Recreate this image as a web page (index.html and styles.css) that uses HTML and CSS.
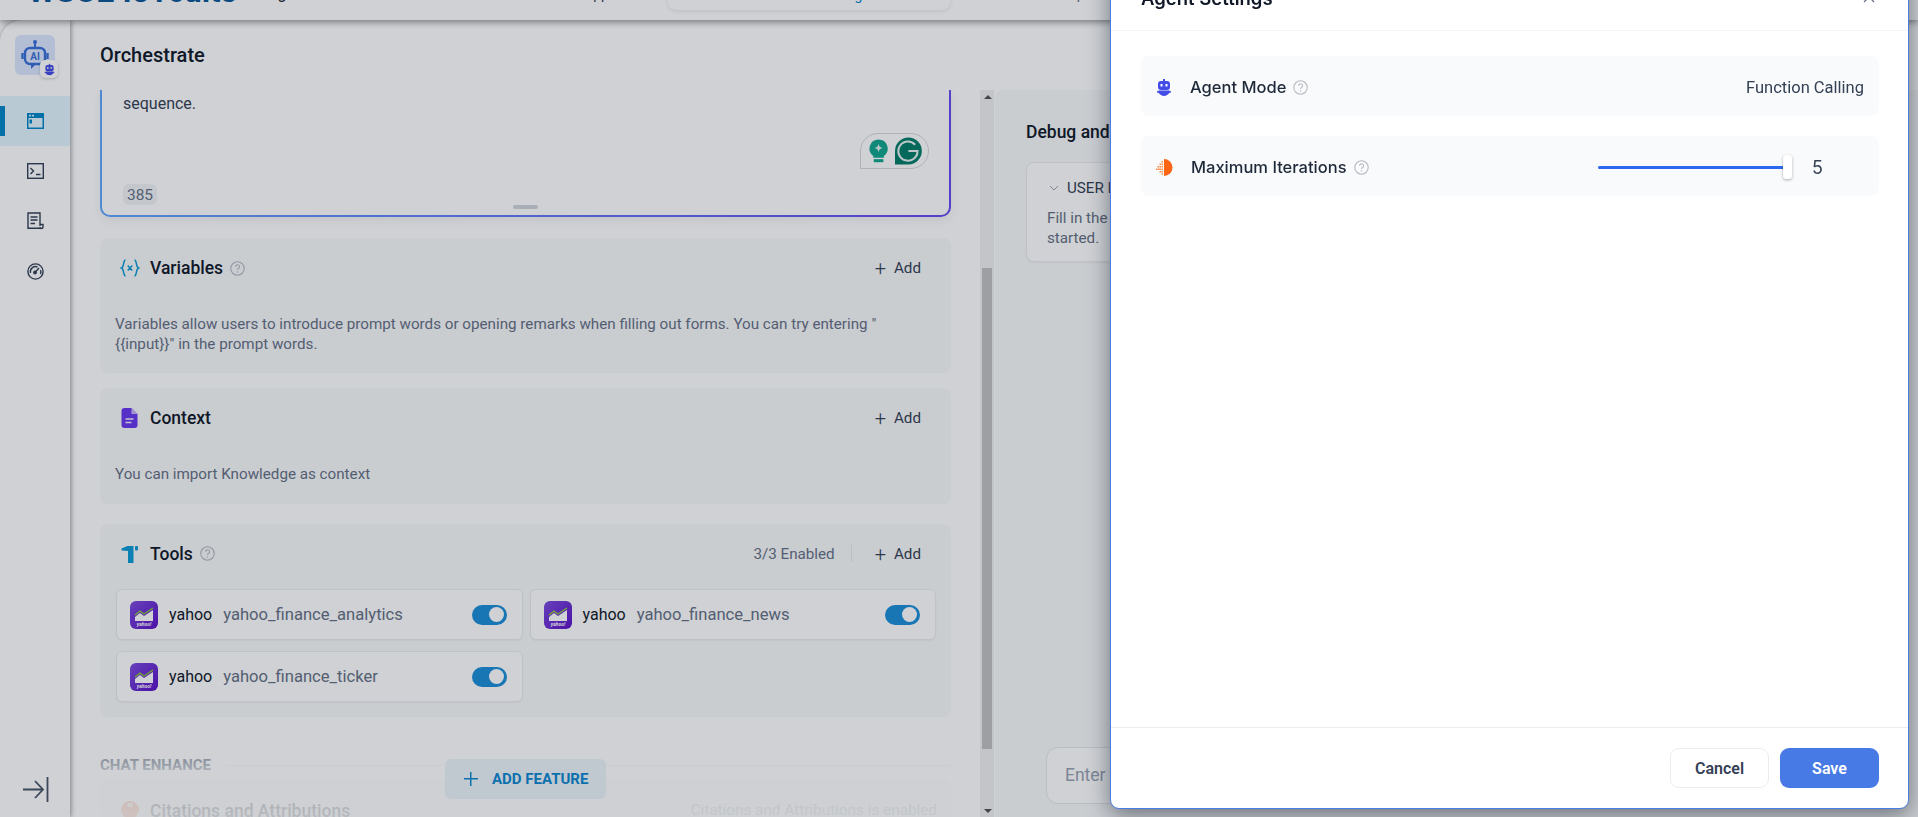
FILE: index.html
```html
<!DOCTYPE html>
<html lang="en">
<head>
<meta charset="utf-8">
<title>Orchestrate</title>
<link rel="stylesheet" href="styles.css">
</head>
<body>
<div class="app">
  <header class="topbar">
    <div class="brand">WSO2 IoTcuits</div>
    <div class="topnav">Agents</div>
    <div class="topnav-2">Apps</div>
    <div class="pill"><span class="pill-text">Finance Agent</span></div>
    <div class="topright">Help</div>
  </header>
  <div class="shell">
    <aside class="sidebar">
      <div class="logo-wrap">
        <div class="logo">
          <svg width="28" height="32" viewBox="0 0 28 32" fill="none"><circle cx="14" cy="3" r="2" fill="#3a6fd8"/><path d="M14 4v5" stroke="#3a6fd8" stroke-width="2"/><rect x="4" y="9" width="20" height="16" rx="5" stroke="#3a6fd8" stroke-width="2.4"/><path d="M1.5 14v6M26.500 14v6" stroke="#3a6fd8" stroke-width="2.4"/><path d="M10 25v5l5-5z" fill="#3a6fd8"/><text x="14" y="21" class="logo-ai">AI</text></svg>
        </div>
        <div class="logo-badge">
          <svg width="11" height="13" viewBox="0 0 16 17"><use href="#robot"/></svg>
        </div>
      </div>
      <nav class="side-nav">
        <div class="side-item active"><span class="active-bar"></span>
          <svg width="17" height="16" viewBox="0 0 17 16"><rect x="0.500" y="0.500" width="16" height="15" fill="#0086c9" stroke="#0086c9"/><rect x="1.500" y="5" width="14" height="9.500" fill="#e4f6fe"/><rect x="2" y="1.800" width="2" height="1.600" fill="#e4f6fe"/><rect x="5" y="1.800" width="2" height="1.600" fill="#e4f6fe"/><rect x="2.500" y="6.500" width="2.500" height="4" fill="#0086c9"/></svg>
        </div>
        <div class="side-item">
          <svg width="17" height="16" viewBox="0 0 17 16" fill="none" stroke="#344054" stroke-width="1.400"><rect x="0.700" y="0.700" width="15.600" height="14.600"/><path d="M3.500 5l3 3-3 3M9 11.500h4.500"/></svg>
        </div>
        <div class="side-item">
          <svg width="17" height="18" viewBox="0 0 17 18" fill="none" stroke="#344054" stroke-width="1.400"><path d="M13 14V1H1v15.300h12.500M13 12.500h3v2.500a1.500 1.500 0 0 1-3 0"/><path d="M3.500 5h7M3.500 8h7M3.500 11.500h4.500"/></svg>
        </div>
        <div class="side-item">
          <svg width="17" height="17" viewBox="0 0 17 17" fill="none" stroke="#344054" stroke-width="1.400"><circle cx="8.500" cy="8.500" r="7.600"/><path d="M3.500 10a5.200 5.200 0 0 1 7-6M13.500 7a5.200 5.200 0 0 1 0 4M7.500 10l4.500-5" /><circle cx="8" cy="9.500" r="1.200" fill="#344054"/></svg>
        </div>
      </nav>
      <div class="collapse">
        <svg width="27" height="27" viewBox="0 0 27 27" fill="none" stroke="#475467" stroke-width="1.800"><path d="M1 13.500h19M13 5l8 8.500-8 8.500M25.500 1v25"/></svg>
      </div>
    </aside>
    <main class="main">
      <h1 class="page-title">Orchestrate</h1>
      <div class="columns">
        <section class="config">
          <div class="prompt-border">
            <div class="prompt">
              <p class="prompt-text">sequence.</p>
              <div class="grammarly">
                <svg width="20" height="24" viewBox="0 0 20 24"><path d="M10 0a9.500 9.500 0 0 1 5.500 17.200V19h-11v-1.800A9.500 9.500 0 0 1 10 0z" fill="#12a68d"/><path d="M10 4.500c.6 3 1.500 4 4.500 4.500-3 .6-4 1.500-4.500 4.500-.6-3-1.500-4-4.500-4.500 3-.6 4-1.500 4.500-4.500z" fill="#e8f5f2"/><rect x="5" y="20.500" width="10" height="3.200" fill="#12a68d"/></svg>
                <svg width="28" height="28" viewBox="0 0 28 28"><path d="M14 0a14 14 0 0 1 0 28H0V14A14 14 0 0 1 14 0z" fill="#027d68"/><path d="M21 7.500A10 10 0 1 0 23.500 14H14" fill="none" stroke="#e9f2f0" stroke-width="2.200"/></svg>
              </div>
              <div class="prompt-foot"><span class="count">385</span><span class="handle"></span></div>
            </div>
          </div>

          <div class="panel panel-vars">
            <div class="panel-head">
              <svg class="panel-icon" width="19" height="18" viewBox="0 0 19 18" fill="none" stroke="#0b9bd6" stroke-width="1.500"><path d="M5 1C2.500 1 3.800 8 1 9c2.800 1 1.500 8 4 8M14 1c2.500 0 1.200 7 4 8-2.800 1-1.500 8-4 8M7.200 6.500l4.600 5M11.800 6.500l-4.600 5"/></svg>
              <span class="panel-title">Variables</span>
              <svg class="help" width="15" height="15" viewBox="0 0 15 15"><use href="#help"/></svg>
              <div class="panel-actions"><span class="add"><span class="plus">+</span>Add</span></div>
            </div>
            <p class="panel-desc">Variables allow users to introduce prompt words or opening remarks when filling out forms. You can try entering "<br>{{input}}" in the prompt words.</p>
          </div>

          <div class="panel panel-ctx">
            <div class="panel-head">
              <svg class="panel-icon" width="17" height="20" viewBox="0 0 17 20"><path d="M3 0h7l6 6v11a3 3 0 0 1-3 3H3a3 3 0 0 1-3-3V3a3 3 0 0 1 3-3z" fill="#6938ef"/><path d="M10 0v6h6z" fill="#c9b8fa"/><path d="M4 11h8M4 14.500h6" stroke="#f0ebff" stroke-width="1.500"/></svg>
              <span class="panel-title">Context</span>
              <div class="panel-actions"><span class="add"><span class="plus">+</span>Add</span></div>
            </div>
            <p class="panel-desc">You can import Knowledge as context</p>
          </div>

          <div class="panel panel-tools">
            <div class="panel-head tools-head">
              <svg class="panel-icon" width="17" height="18" viewBox="0 0 17 18"><path d="M0 3.500L6 1h6v17H6.500V6L0 5.500z" fill="#0b9bd6"/><rect x="13.500" y="1" width="3" height="4.500" rx="1" fill="#0b9bd6"/></svg>
              <span class="panel-title">Tools</span>
              <svg class="help" width="15" height="15" viewBox="0 0 15 15"><use href="#help"/></svg>
              <div class="panel-actions">
                <span class="enabled">3/3 Enabled</span><span class="divider"></span>
                <span class="add"><span class="plus">+</span>Add</span>
              </div>
            </div>
            <div class="tool-grid">
              <div class="tool">
                <svg class="tool-logo" width="28" height="28" viewBox="0 0 28 28"><use href="#yahoo"/></svg>
                <span class="tool-vendor">yahoo</span><span class="tool-name">yahoo_finance_analytics</span>
                <span class="toggle"></span>
              </div>
              <div class="tool">
                <svg class="tool-logo" width="28" height="28" viewBox="0 0 28 28"><use href="#yahoo"/></svg>
                <span class="tool-vendor">yahoo</span><span class="tool-name">yahoo_finance_news</span>
                <span class="toggle"></span>
              </div>
              <div class="tool">
                <svg class="tool-logo" width="28" height="28" viewBox="0 0 28 28"><use href="#yahoo"/></svg>
                <span class="tool-vendor">yahoo</span><span class="tool-name">yahoo_finance_ticker</span>
                <span class="toggle"></span>
              </div>
            </div>
          </div>

          <div class="enhance-head"><span class="enhance-label">CHAT ENHANCE</span><span class="enhance-line"></span></div>
          <div class="panel panel-cite">
            <svg class="cite-icon" width="18" height="18" viewBox="0 0 18 18"><circle cx="9" cy="9" r="9" fill="#f9703e"/><text x="9" y="15" class="cite-mark">“</text></svg>
            <span class="panel-title">Citations and Attributions</span>
            <span class="cite-note">Citations and Attributions is enabled</span>
          </div>
          <div class="fade"></div>
          <button class="add-feature"><span class="af-plus"></span>ADD FEATURE</button>
        </section>
        <div class="scrollbar">
          <span class="arrow-up"></span>
          <span class="thumb"></span>
          <span class="arrow-down"></span>
        </div>
        <section class="debug">
          <h2 class="debug-title">Debug and Preview</h2>
          <div class="user-card">
            <div class="user-head"><svg width="10" height="6" viewBox="0 0 10 6" fill="none" stroke="#98a2b3"><path d="M1 1l4 4 4-4"/></svg><span>USER INPUT</span></div>
            <p class="user-text">Fill in the value of the variable, which will be automatically replaced in the prompt word every time a new session is<br>started.</p>
          </div>
          <div class="chat-input">Enter your message</div>
        </section>
      </div>
    </main>
  </div>
</div>

<div class="overlay"></div>

<aside class="modal">
  <div class="modal-head">
    <span class="modal-title">Agent Settings</span>
    <svg width="14" height="14" viewBox="0 0 14 14" fill="none" stroke="#667085" stroke-width="1.300"><path d="M2 2l10 10M12 2L2 12"/></svg>
  </div>
  <div class="modal-body">
    <div class="row">
      <svg class="row-icon" width="16" height="17" viewBox="0 0 16 17"><use href="#robot"/></svg>
      <span class="row-label">Agent Mode</span>
      <svg class="help" width="15" height="15" viewBox="0 0 15 15"><use href="#help"/></svg>
      <span class="row-value">Function Calling</span>
    </div>
    <div class="row">
      <svg class="row-icon" width="17" height="17" viewBox="0 0 17 17">
        <path d="M8 0a8.500 8.500 0 0 1 0 17z" fill="#fb6514"/>
        <path d="M5.500 2h1.500v1.500H5.500zM3.500 4.500H5V6H3.500zM5.500 4.500h1.500V6H5.500zM1.500 7H3v1.500H1.500zM3.500 7H5v1.500H3.500zM5.500 7h1.500v1.500H5.500zM0 9.500h1.500V11H0zM1.800 9.500h1.500V11H1.800zM3.500 9.500H5V11H3.500zM5.500 9.500h1.500V11H5.500zM3.500 12H5v1.500H3.500zM5.500 12h1.500v1.500H5.500zM5.500 14.300h1.500v1.500H5.500z" fill="#fb8b4a"/>
      </svg>
      <span class="row-label row-label-long">Maximum Iterations</span>
      <svg class="help" width="15" height="15" viewBox="0 0 15 15"><use href="#help"/></svg>
      <div class="slider">
        <span class="slider-track"></span><span class="slider-thumb"></span>
        <span class="slider-value">5</span>
      </div>
    </div>
  </div>
  <div class="modal-foot">
    <button class="btn btn-cancel">Cancel</button>
    <button class="btn btn-save">Save</button>
  </div>
</aside>

<svg class="defs" width="0" height="0" aria-hidden="true">
  <defs>
    <symbol id="robot" viewBox="0 0 16 17">
      <rect x="7" y="0" width="2" height="3" fill="#444ce7"/>
      <rect x="2" y="2" width="12" height="9" rx="3" fill="#444ce7"/>
      <rect x="4.500" y="5" width="2" height="2.500" fill="#fff"/>
      <rect x="9.500" y="5" width="2" height="2.500" fill="#fff"/>
      <path d="M3 11.500h10c.5 0 2 .5 2 1.500s-1 .8-1.600.8C12.500 15.500 10 17 8 17s-4.500-1.500-5.400-3.200c-.6 0-1.600.2-1.600-.8s1.500-1.500 2-1.500z" fill="#444ce7"/>
    </symbol>
    <symbol id="help" viewBox="0 0 15 15">
      <circle cx="7.500" cy="7.500" r="6.700" fill="none" stroke="#b6bac2" stroke-width="1.100"/>
      <path d="M5.600 5.800a2 2 0 1 1 2.900 1.800c-.6.300-1 .7-1 1.500" fill="none" stroke="#b6bac2" stroke-width="1.100"/>
      <circle cx="7.500" cy="11" r=".7" fill="#b6bac2"/>
    </symbol>
    <linearGradient id="yg" x1="0" y1="0" x2="1" y2="1"><stop offset="0" stop-color="#7d4be0"/><stop offset="1" stop-color="#5a0fc8"/></linearGradient>
    <symbol id="yahoo" viewBox="0 0 28 28">
      <rect width="28" height="28" rx="6" fill="url(#yg)"/>
      <path d="M5 16l5-4 4 3 9-6v11H5z" fill="#fff"/>
      <path d="M5 14l5-4 4 3 9-6" fill="none" stroke="#8ad12f" stroke-width="1.300"/>
      <text x="14" y="25" class="yahoo-mark">yahoo!</text>
    </symbol>
  </defs>
</svg>
</body>
</html>
```

FILE: styles.css
```css
* { box-sizing: border-box; }
html, body { margin: 0; padding: 0; height: 100%; overflow: hidden; }
body { font-family: Roboto, "Liberation Sans", sans-serif; color: #101828; background: #fff; }
p, h1, h2 { margin: 0; }
button { font: inherit; border: 0; }

.app { display: flex; flex-direction: column; width: 1918px; height: 817px; overflow: hidden; }

.topbar { position: relative; z-index: 3; flex: 0 0 20px; display: flex; align-items: flex-start; background: #fff; box-shadow: 0 2px 7px rgba(0, 0, 0, .45); }
.brand { flex: none; margin: -28px 0 0 28px; width: 239px; font-size: 31.500px; line-height: 40px; font-weight: 700; color: #0b5796; white-space: nowrap; }
.topnav { flex: none; margin: -18px 0 0 0; width: 317px; font-size: 16px; line-height: 24px; color: #101828; white-space: nowrap; }
.topnav-2 { flex: none; margin: -18px 0 0 0; width: 84px; font-size: 14px; line-height: 24px; color: #344054; white-space: nowrap; }
.pill { flex: none; margin: -20px 0 0 0; width: 282px; height: 30px; padding: 0 0 0 125px; background: #fff; border-radius: 0 0 8px 8px; box-shadow: 0 1px 4px rgba(0, 0, 0, .1); font-size: 14px; line-height: 30px; white-space: nowrap; }
.pill-text { color: #0086c9; }
.topright { flex: none; margin: -18px 0 0 106px; font-size: 14px; line-height: 24px; color: #667085; white-space: nowrap; }

.shell { flex: 1; display: flex; min-height: 0; background: #fff; }

.sidebar { position: relative; z-index: 2; flex: 0 0 70px; display: flex; flex-direction: column; background: #fff; border-top-left-radius: 22px; box-shadow: 1px 0 5px rgba(0, 0, 0, .4); }
.logo-wrap { position: relative; width: 40px; height: 40px; margin: 15px 0 0 15px; }
.logo { width: 40px; height: 40px; display: flex; align-items: center; justify-content: center; background: #dce8ff; border-radius: 6px; }
.logo-ai { font: 700 10px Roboto, sans-serif; fill: #3a6fd8; text-anchor: middle; }
.logo-badge { position: absolute; right: -3px; bottom: -3px; width: 18px; height: 18px; display: flex; align-items: center; justify-content: center; background: #fff; border-radius: 5px; box-shadow: 0 1px 3px rgba(0, 0, 0, .2); }
.side-nav { margin-top: 21px; }
.side-item { position: relative; height: 50px; display: flex; align-items: center; justify-content: center; }
.side-item.active { background: #e4f6fe; }
.active-bar { position: absolute; left: 0; top: 10px; width: 5px; height: 30px; background: #0086c9; }
.collapse { margin: auto 0 14px 22px; height: 27px; }

.main { flex: 1; display: flex; flex-direction: column; min-width: 0; }
.page-title { flex: 0 0 70px; padding-left: 30px; font-size: 20px; line-height: 70px; font-weight: 500; color: #101828; }
.columns { flex: 1; display: flex; min-height: 0; }

.config { position: relative; flex: 0 0 911px; padding: 0 30px 0 30px; overflow: hidden; }
.prompt-border { height: 127px; padding: 0 2px 2px; background: linear-gradient(90deg, #60a5ff 0%, #664af0 100%); border-radius: 0 0 10px 10px; box-shadow: 0 4px 10px rgba(16, 24, 40, .06); }
.prompt { position: relative; height: 125px; padding: 4px 21px 0; background: #fff; border-radius: 0 0 8px 8px; display: flex; flex-direction: column; }
.prompt-text { font-size: 16px; line-height: 20px; color: #344054; }
.grammarly { position: absolute; left: 758px; top: 43px; width: 69px; height: 36px; padding: 0 6px 0 8px; display: flex; align-items: center; gap: 7px; border: 1px solid #d6d8dd; border-radius: 18px 18px 18px 0; }
.prompt-foot { margin-top: auto; padding-bottom: 10px; display: flex; align-items: flex-end; position: relative; }
.count { width: 34px; height: 21px; display: flex; align-items: center; justify-content: center; background: #f2f4f7; border-radius: 6px; font-size: 15.500px; color: #667085; }
.handle { position: absolute; left: 390px; bottom: 6px; width: 25px; height: 4px; border-radius: 2px; background: #d0d5dd; }

.panel { background: #f9fafb; border-radius: 8px; }
.panel-vars { height: 135px; margin-top: 21px; }
.panel-ctx { height: 116px; margin-top: 15px; }
.panel-tools { height: 193px; margin-top: 20px; padding: 0 15px 0 16px; }
.panel-head { height: 60px; padding: 0 30px 0 20px; display: flex; align-items: center; }
.tools-head { height: 59px; padding: 0 15px 0 4px; }
.panel-icon { flex: none; width: 20px; margin-right: 10px; }
.panel-title { font-size: 17.500px; font-weight: 500; color: #101828; }
.help { flex: none; margin-left: 7px; }
.panel-actions { margin-left: auto; display: flex; align-items: center; }
.add { display: flex; align-items: center; font-size: 15.200px; color: #344054; }
.plus { margin-right: 8px; font-size: 20px; font-weight: 300; line-height: 14px; }
.enabled { font-size: 15.200px; color: #667085; }
.divider { width: 1px; height: 17px; margin: 0 23px 0 16px; background: #e4e7ec; }
.panel-desc { padding: 16px 30px 19px 15px; font-size: 15.200px; line-height: 20px; color: #667085; }

.tool-grid { margin-top: 6px; display: grid; grid-template-columns: 1fr 1fr; gap: 11px 7px; }
.tool { height: 51px; padding: 0 15px 0 13px; display: flex; align-items: center; background: #fff; border: 1px solid #eaecf0; border-radius: 6px; box-shadow: 0 1px 2px rgba(16, 24, 40, .05); }
.tool-logo { flex: none; margin-right: 11px; }
.yahoo-mark { font: italic 700 5px Roboto, sans-serif; fill: #fff; text-anchor: middle; }
.tool-vendor { font-size: 16px; color: #101828; margin-right: 11px; }
.tool-name { font-size: 16.600px; color: #667085; }
.toggle { position: relative; margin-left: auto; width: 35px; height: 20px; border-radius: 10px; background: #1c8ed8; }
.toggle::after { content: ""; position: absolute; right: 3px; top: 2.500px; width: 15px; height: 15px; border-radius: 50%; background: #fff; }

.enhance-head { margin-top: 39px; display: flex; align-items: center; gap: 15px; height: 18px; }
.enhance-label { font-size: 15px; font-weight: 700; color: #667085; white-space: nowrap; }
.enhance-line { flex: 1; height: 1px; background: #f0f2f5; }
.panel-cite { height: 60px; margin-top: 6px; padding: 21px 14px 0 21px; display: flex; align-items: flex-start; }
.cite-icon { flex: none; margin-right: 11px; }
.cite-mark { font: 700 16px Roboto, sans-serif; fill: #fff; text-anchor: middle; }
.cite-note { margin-left: auto; font-size: 15.300px; color: #98a2b3; }
.fade { position: absolute; left: 0; right: 0; bottom: 0; height: 77px; background: linear-gradient(180deg, rgba(255, 255, 255, 0) 0%, rgba(255, 255, 255, .7) 40%, rgba(255, 255, 255, .88) 100%); }
.add-feature { position: absolute; left: 375px; top: 669px; width: 161px; height: 40px; display: flex; align-items: center; padding: 0 0 0 19px; background: #eef6fb; border-radius: 6px; font-size: 15px; font-weight: 700; color: #0b86d0; }
.af-plus { position: relative; width: 14px; height: 14px; margin-right: 14px; background: linear-gradient(#0b86d0, #0b86d0) center / 14px 1.500px no-repeat, linear-gradient(#0b86d0, #0b86d0) center / 1.500px 14px no-repeat; }

.scrollbar { flex: 0 0 14px; margin-left: -1px; position: relative; padding: 178px 2px 0; background: #f1f1f1; }
.thumb { display: block; height: 481px; background: #c1c1c1; }
.arrow-up, .arrow-down { position: absolute; left: 4px; width: 0; height: 0; border-left: 4px solid transparent; border-right: 4px solid transparent; }
.arrow-up { top: 5px; border-bottom: 4px solid #505050; }
.arrow-down { bottom: 4px; border-top: 4px solid #505050; }

.debug { position: relative; flex: 1; padding: 32px 40px 0 31px; background: #f9fafb; border-radius: 8px 0 0 0; min-width: 0; margin-left: 1px; }
.debug-title { font-size: 17.500px; line-height: 20px; font-weight: 500; color: #101828; white-space: nowrap; }
.user-card { margin-top: 20px; height: 100px; padding: 14px 20px; background: #fff; border: 1px solid #eaecf0; border-radius: 8px; box-shadow: 0 1px 2px rgba(16, 24, 40, .05); }
.user-head { display: flex; align-items: center; gap: 8px; padding-left: 2px; font-size: 15.200px; line-height: 22px; color: #344054; }
.user-text { margin-top: 9px; font-size: 15.200px; line-height: 20px; color: #667085; }
.chat-input { position: absolute; left: 51px; right: 40px; top: 657px; height: 57px; padding: 0 18px; border: 1px solid #e4e7ec; border-radius: 12px; background: #fff; font-size: 17.500px; line-height: 54px; color: #98a2b3; }

.overlay { position: fixed; inset: 0; background: rgba(16, 24, 40, .2); z-index: 5; }

.modal { position: fixed; z-index: 6; left: 1110px; top: -40px; width: 799px; height: 849px; display: flex; flex-direction: column; background: #fff; border: 1.500px solid #4a7de4; border-radius: 9px; box-shadow: 0 6px 22px rgba(16, 24, 40, .5); font-family: Inter, Roboto, sans-serif; }
.modal-head { flex: 0 0 70px; padding: 24px 32px 0 30px; display: flex; justify-content: space-between; align-items: flex-start; border-bottom: 1px solid #f2f4f7; }
.modal-title { font-size: 18.500px; line-height: 26px; font-weight: 600; color: #101828; }
.modal-head svg { margin-top: 5px; }
.modal-body { flex: 1; padding: 25px 29px 0 30px; }
.row { height: 60px; padding: 2px 15px 0 15px; margin-bottom: 20px; display: flex; align-items: center; background: #f9fafb; border-radius: 8px; }
.row-icon { flex: none; margin-right: 18px; }
.row-label { font-size: 16.500px; font-weight: 500; color: #1d2939; }
.row-value { margin-left: auto; font-family: Roboto, sans-serif; font-size: 16.500px; color: #344054; }
.slider { margin-left: auto; display: flex; align-items: center; position: relative; padding-right: 41px; }
.slider-track { width: 186px; height: 3px; background: #2a68f0; border-radius: 2px; }
.slider-thumb { width: 9px; height: 24px; background: #fff; border-radius: 3px; box-shadow: 0 1px 3px rgba(16, 24, 40, .35); margin-left: -1px; }
.slider-value { margin-left: 20px; font-size: 18px; color: #344054; }
.modal-foot { flex: 0 0 81px; padding: 20px 29px 0 31px; display: flex; justify-content: flex-end; gap: 11px; border-top: 1px solid #eaecf0; }
.btn { width: 99px; height: 40px; border-radius: 9px; font-family: Roboto, sans-serif; font-size: 16px; font-weight: 600; }
.btn-cancel { background: #fff; border: 1px solid #eaecf0; color: #344054; }
.btn-save { background: #477ae4; color: #fff; }
.defs { position: absolute; }
```
